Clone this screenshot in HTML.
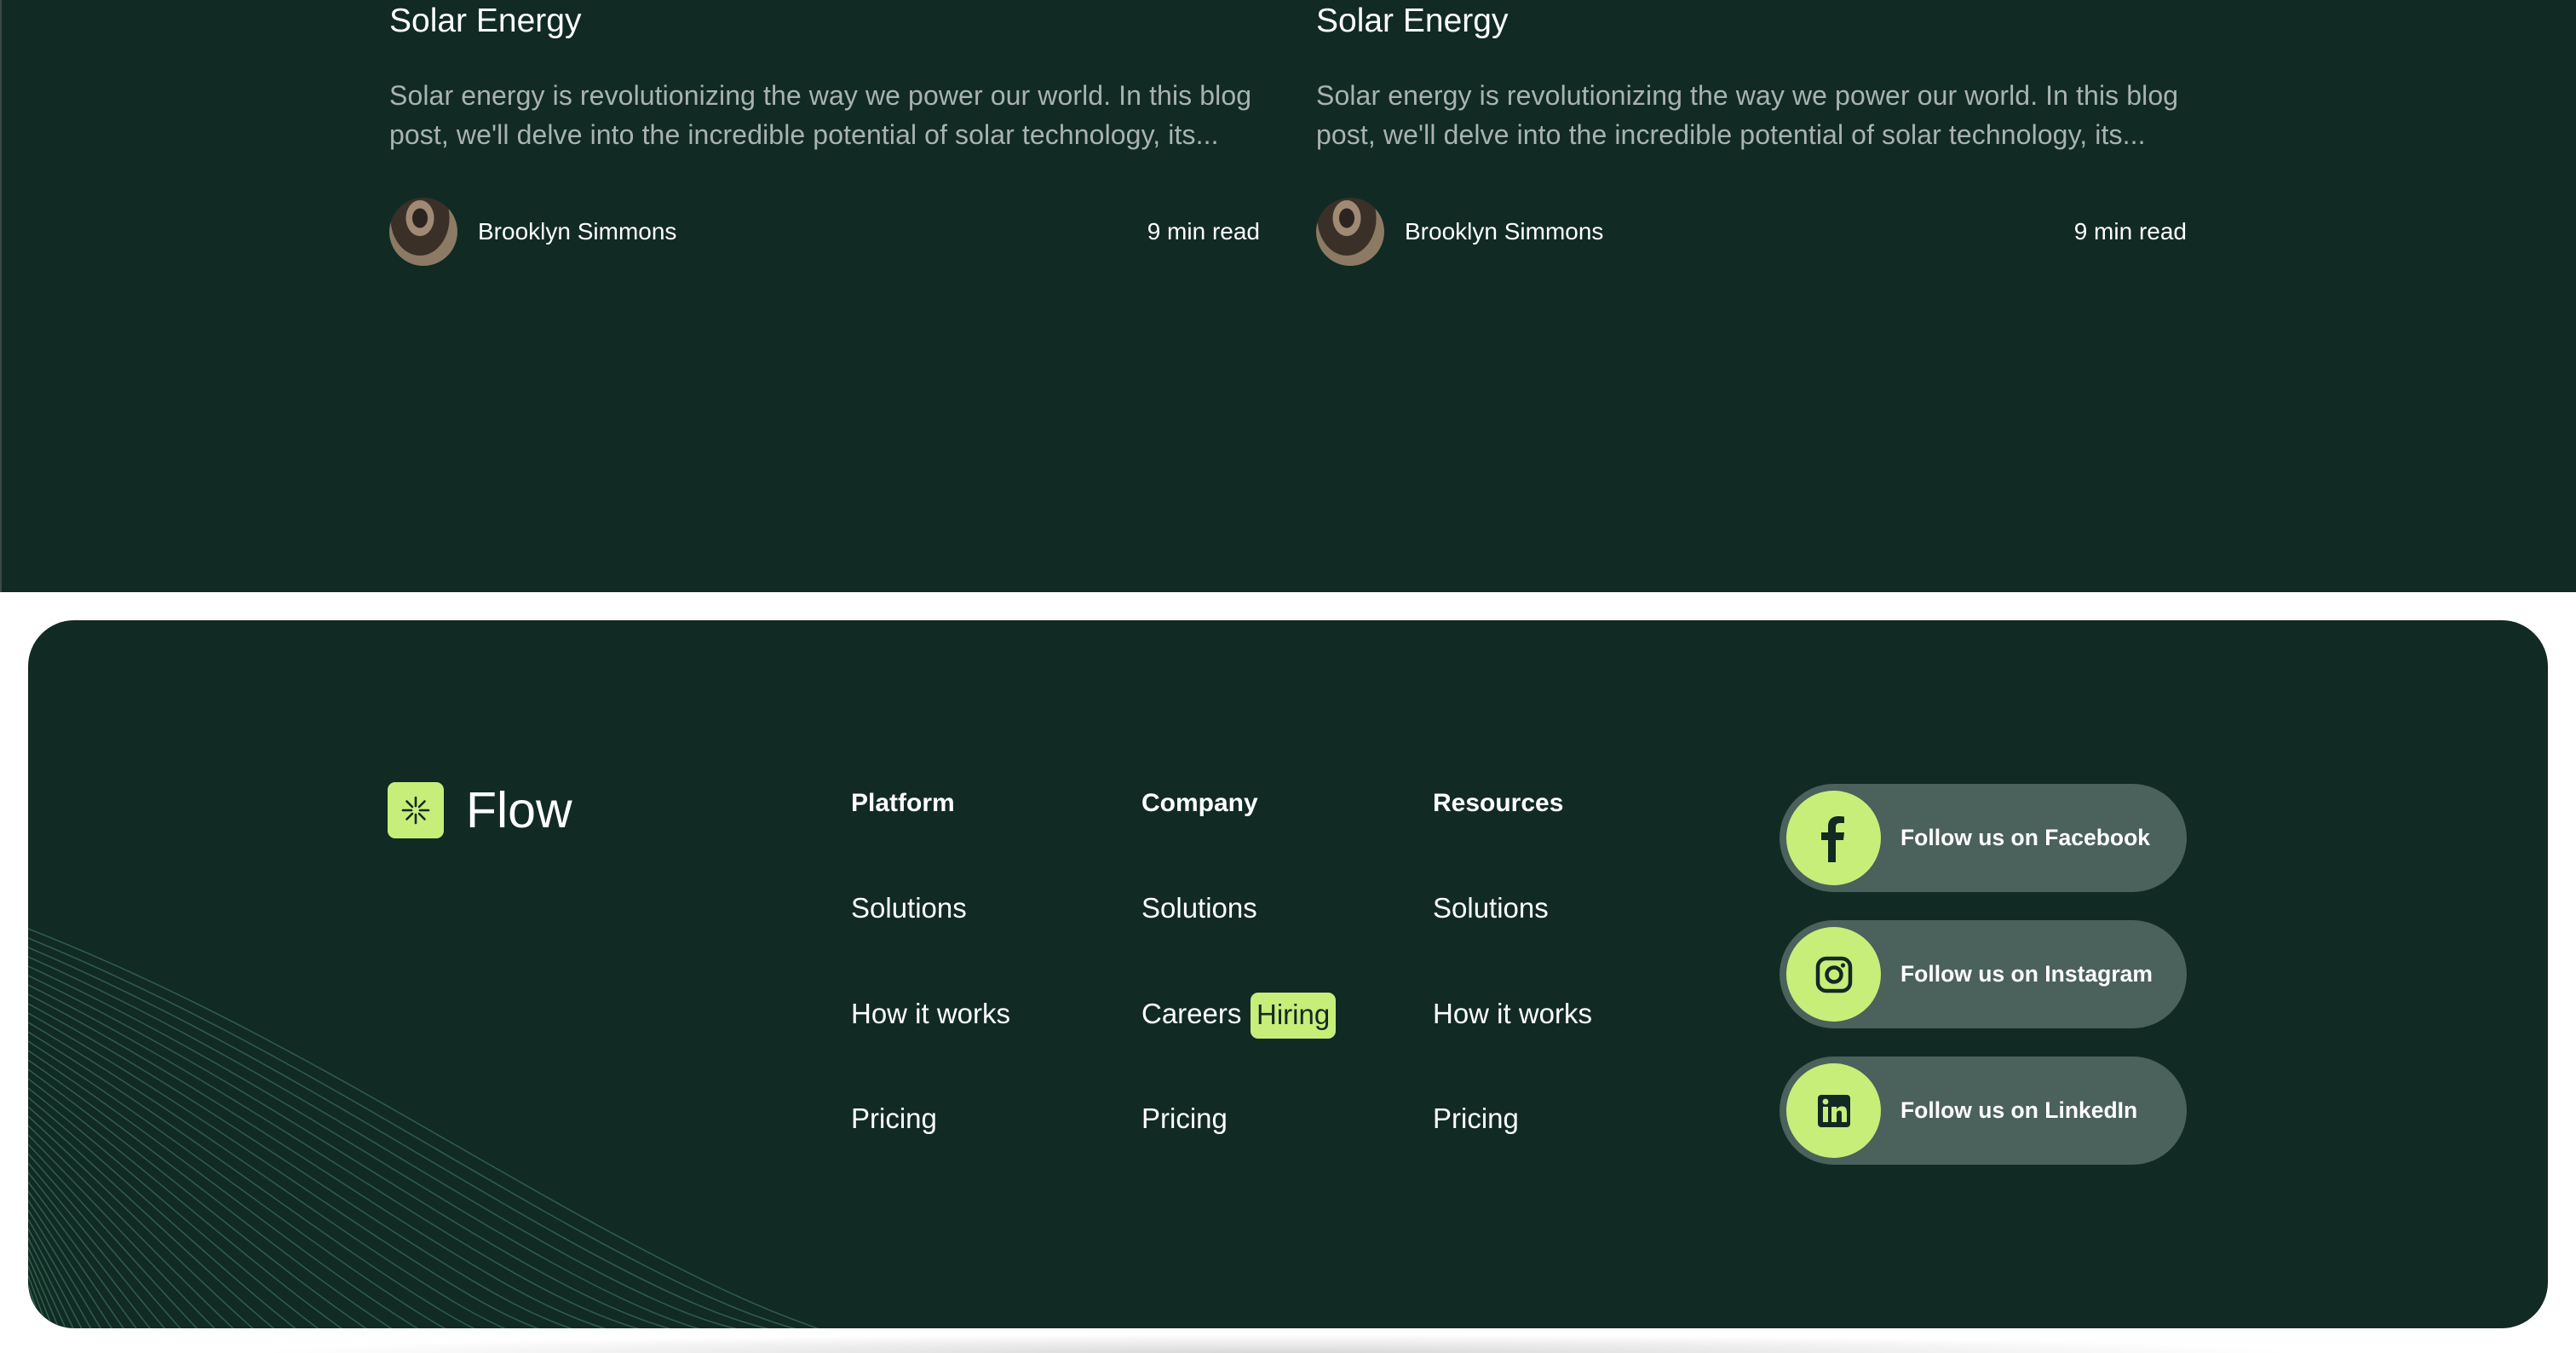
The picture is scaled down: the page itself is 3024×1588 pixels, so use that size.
<!DOCTYPE html>
<html><head><meta charset="utf-8"><style>
*{margin:0;padding:0;box-sizing:border-box}
html,body{width:3024px;height:1588px;overflow:hidden}
body{background:#fff;position:relative;font-family:"Liberation Sans",sans-serif;color:#fff}
.top{position:absolute;left:0;top:0;width:3024px;height:695px;background:#112a24;border-left:2px solid #3a4a46}
.a{position:absolute;white-space:nowrap}
.title{font-size:39px;line-height:50px}
.desc{font-size:32px;line-height:46px;color:#aab2af;letter-spacing:0.1px}
.av{position:absolute;width:80px;height:80px;border-radius:50%;background:radial-gradient(ellipse at 45% 30%,#2b2420 0 14%,#a08a74 15% 26%,#3a3028 27% 55%,#8c7a64 56%)}
.name{font-size:28px;line-height:34px}
.card{position:absolute;left:33px;top:728px;width:2958px;height:831px;background:#112a24;border-radius:54px;overflow:hidden}
.h{font-size:30px;font-weight:bold;line-height:36px}
.l{font-size:33px;line-height:38px}
.soc{position:absolute;left:2056px;width:478px;height:127px;border-radius:64px;background:#4b615b}
.soc .c{position:absolute;left:8px;top:8px;width:111px;height:111px;border-radius:50%;background:#c8ee7a;display:flex;align-items:center;justify-content:center}
.soc .t{position:absolute;left:142px;top:0;line-height:127px;font-size:26.5px;font-weight:bold;white-space:nowrap}
</style></head><body>
<div class="top">
  <div class="a title" style="left:455px;top:0px">Solar Energy</div>
  <div class="a desc" style="left:455px;top:89px">Solar energy is revolutionizing the way we power our world. In this blog<br>post, we'll delve into the incredible potential of solar technology, its...</div>
  <div class="av" style="left:455px;top:232px"></div>
  <div class="a name" style="left:559px;top:255px">Brooklyn Simmons</div>
  <div class="a name" style="right:1545px;top:255px">9 min read</div>

  <div class="a title" style="left:1543px;top:0px">Solar Energy</div>
  <div class="a desc" style="left:1543px;top:89px">Solar energy is revolutionizing the way we power our world. In this blog<br>post, we'll delve into the incredible potential of solar technology, its...</div>
  <div class="av" style="left:1543px;top:232px"></div>
  <div class="a name" style="left:1647px;top:255px">Brooklyn Simmons</div>
  <div class="a name" style="right:457px;top:255px">9 min read</div>
</div>

<div class="card">
  <svg style="position:absolute;left:0;top:0" width="1000" height="831" viewBox="0 0 1000 831">
    <g fill="none" stroke="#2f5c4a" stroke-width="1.6">
      <path d="M0,362 C250,460 450,590 650,700 S900,820 950,840"/>
      <path d="M0,373 C245,473 440,602 635,710 S880,825 930,840"/>
      <path d="M0,384 C240,486 430,614 620,720 S860,830 910,840"/>
      <path d="M0,395 C235,499 420,626 605,730 S840,835 890,840"/>
      <path d="M0,406 C230,512 410,638 590,740 S820,840 870,845"/>
      <path d="M0,417 C225,525 400,650 575,750 S800,840 850,845"/>
      <path d="M0,428 C220,538 390,662 560,760 S780,840 830,845"/>
      <path d="M0,439 C215,551 380,674 545,770 S760,840 810,845"/>
      <path d="M0,450 C210,564 370,686 530,780 S740,840 790,845"/>
      <path d="M0,461 C205,577 360,698 515,790 S720,840 770,845"/>
      <path d="M0,472 C200,590 350,710 500,800 S700,845 750,850"/>
      <path d="M0,483 C195,603 340,722 485,810 S680,845 730,850"/>
      <path d="M0,494 C190,616 330,734 470,820 S660,845 710,850"/>
      <path d="M0,505 C185,629 320,746 455,830 S640,845 690,850"/>
      <path d="M0,516 C180,642 310,758 440,840 S620,850 670,850"/>
      <path d="M0,527 C175,655 300,770 425,850"/>
      <path d="M0,538 C170,668 290,782 410,860"/>
      <path d="M0,549 C165,681 280,794 395,870"/>
      <path d="M0,560 C160,694 270,806 380,880"/>
      <path d="M0,571 C155,707 260,818 365,890"/>
      <path d="M0,582 C150,720 250,830 350,900"/>
      <path d="M0,593 C145,733 240,842 335,910"/>
      <path d="M0,604 C140,746 230,854 320,920"/>
      <path d="M0,615 C135,759 220,866 305,930"/>
      <path d="M0,626 C130,772 210,878 290,940"/>
      <path d="M0,637 C125,785 200,890 275,950"/>
      <path d="M0,648 C120,798 190,902 260,960"/>
      <path d="M0,659 C115,811 180,914 245,970"/>
      <path d="M0,670 C110,824 170,926 230,980"/>
      <path d="M0,681 C105,837 160,938 215,990"/>
      <path d="M0,692 C100,850 150,950 200,1000"/>
      <path d="M0,703 C95,863 140,962 185,1010"/>
      <path d="M0,714 C90,876 130,974 170,1020"/>
      <path d="M0,725 C85,889 120,986 155,1030"/>
      <path d="M0,736 C80,902 110,998 140,1040"/>
      <path d="M0,747 C75,915 100,1010 125,1050"/>
      <path d="M0,758 C70,928 90,1022 110,1060"/>
      <path d="M0,769 C65,941 80,1034 95,1070"/>
      <path d="M0,780 C60,954 70,1046 80,1080"/>
      <path d="M0,791 C55,967 60,1058 65,1090"/>
    </g>
  </svg>
  <div class="a" style="left:422px;top:190px;width:66px;height:66px;border-radius:9px;background:#c8ee7a">
    <svg width="66" height="66" viewBox="0 0 66 66"><g stroke="#112a24" stroke-width="2.6" stroke-linecap="round">
      <path d="M33 18V28M33 38V48M18 33H28M38 33H48M22.5 22.5L29 29M37 37L43.5 43.5M43.5 22.5L37 29M29 37L22.5 43.5"/></g></svg>
  </div>
  <div class="a" style="left:514px;top:187px;font-size:59px;line-height:72px">Flow</div>

  <div class="a h" style="left:966px;top:197px">Platform</div>
  <div class="a h" style="left:1307px;top:197px">Company</div>
  <div class="a h" style="left:1649px;top:197px">Resources</div>

  <div class="a l" style="left:966px;top:319px">Solutions</div>
  <div class="a l" style="left:1307px;top:319px">Solutions</div>
  <div class="a l" style="left:1649px;top:319px">Solutions</div>

  <div class="a l" style="left:966px;top:443px">How it works</div>
  <div class="a l" style="left:1307px;top:443px">Careers</div>
  <div class="a l" style="left:1435px;top:437px;height:54px;padding:0 7px;line-height:52px;border-radius:9px;background:#c8ee7a;color:#112a24">Hiring</div>
  <div class="a l" style="left:1649px;top:443px">How it works</div>

  <div class="a l" style="left:966px;top:566px">Pricing</div>
  <div class="a l" style="left:1307px;top:566px">Pricing</div>
  <div class="a l" style="left:1649px;top:566px">Pricing</div>

  <div class="soc" style="top:192px"><div class="c">
    <svg width="40" height="56" viewBox="0 0 40 56"><path d="M13 56V30H5V21H13V14C13 6 18 2 25 2C28 2 31 2.4 32 2.6V10H27C23 10 22 12 22 15V21H32L31 30H22V56Z" fill="#112a24"/></svg>
  </div><div class="t">Follow us on Facebook</div></div>
  <div class="soc" style="top:352px"><div class="c">
    <svg width="44" height="44" viewBox="0 0 44 44"><rect x="3" y="3" width="38" height="38" rx="10" fill="none" stroke="#112a24" stroke-width="4.5"/><circle cx="22" cy="22" r="8.5" fill="none" stroke="#112a24" stroke-width="4.5"/><circle cx="32.5" cy="11" r="2.6" fill="#112a24"/></svg>
  </div><div class="t">Follow us on Instagram</div></div>
  <div class="soc" style="top:512px"><div class="c">
    <svg width="38" height="38" viewBox="0 0 38 38"><rect width="38" height="38" rx="4" fill="#112a24"/><rect x="6" y="14" width="6" height="18" fill="#c8ee7a"/><circle cx="9" cy="8" r="3.4" fill="#c8ee7a"/><path d="M16 14H22V17C23.5 14.5 26 13.5 28.5 13.5C33 13.5 34 16.5 34 21V32H28V22C28 19.5 27.3 18.5 25.2 18.5C23 18.5 22 20 22 22.5V32H16Z" fill="#c8ee7a"/></svg>
  </div><div class="t">Follow us on LinkedIn</div></div>
</div>
<div class="a" style="left:300px;top:1566px;width:2400px;height:22px;background:radial-gradient(ellipse at 50% 100%,#d8d8d8,rgba(255,255,255,0) 70%)"></div>
</body></html>
